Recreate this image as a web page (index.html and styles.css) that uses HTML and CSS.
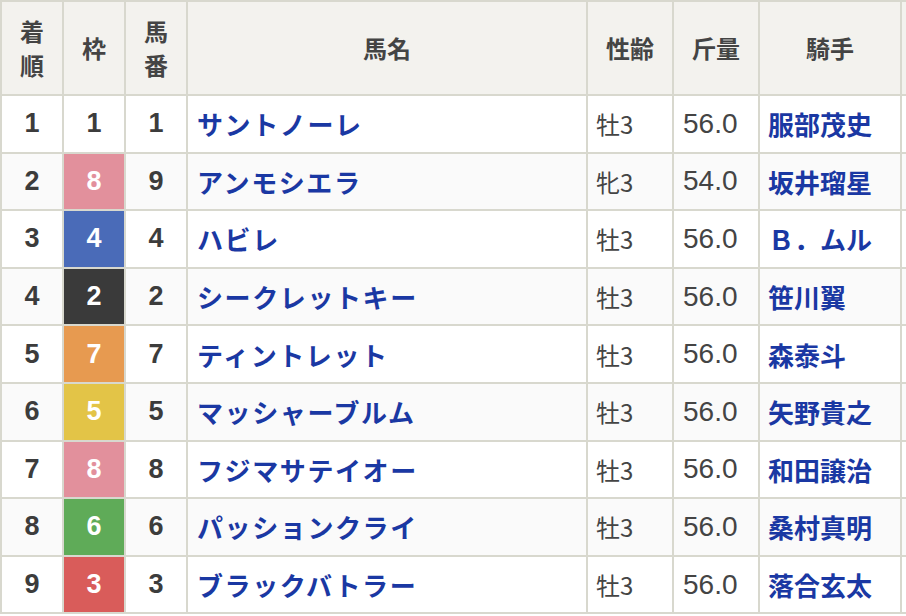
FILE: index.html
```html
<!DOCTYPE html>
<html lang="ja">
<head>
<meta charset="utf-8">
<link rel="stylesheet" href="styles.css">
</head>
<body>
<table class="result">
  <colgroup>
    <col class="c-rank"><col class="c-waku"><col class="c-num"><col class="c-name"><col class="c-sex"><col class="c-wt"><col class="c-jockey"><col class="c-time">
  </colgroup>
  <thead>
    <tr>
      <th>着<br>順</th><th>枠</th><th>馬<br>番</th><th>馬名</th><th>性齢</th><th>斤量</th><th>騎手</th><th></th>
    </tr>
  </thead>
  <tbody>
    <tr><td class="num">1</td><td class="num waku w1">1</td><td class="num">1</td><td class="name">サントノーレ</td><td class="sex">牡3</td><td class="wt">56.0</td><td class="jockey">服部茂史</td><td></td></tr>
    <tr><td class="num">2</td><td class="num waku w8">8</td><td class="num">9</td><td class="name">アンモシエラ</td><td class="sex">牝3</td><td class="wt">54.0</td><td class="jockey">坂井瑠星</td><td></td></tr>
    <tr><td class="num">3</td><td class="num waku w4">4</td><td class="num">4</td><td class="name">ハビレ</td><td class="sex">牡3</td><td class="wt">56.0</td><td class="jockey">Ｂ．ムル</td><td></td></tr>
    <tr><td class="num">4</td><td class="num waku w2">2</td><td class="num">2</td><td class="name">シークレットキー</td><td class="sex">牡3</td><td class="wt">56.0</td><td class="jockey">笹川翼</td><td></td></tr>
    <tr><td class="num">5</td><td class="num waku w7">7</td><td class="num">7</td><td class="name">ティントレット</td><td class="sex">牡3</td><td class="wt">56.0</td><td class="jockey">森泰斗</td><td></td></tr>
    <tr><td class="num">6</td><td class="num waku w5">5</td><td class="num">5</td><td class="name">マッシャーブルム</td><td class="sex">牡3</td><td class="wt">56.0</td><td class="jockey">矢野貴之</td><td></td></tr>
    <tr><td class="num">7</td><td class="num waku w8">8</td><td class="num">8</td><td class="name">フジマサテイオー</td><td class="sex">牡3</td><td class="wt">56.0</td><td class="jockey">和田譲治</td><td></td></tr>
    <tr><td class="num">8</td><td class="num waku w6">6</td><td class="num">6</td><td class="name">パッションクライ</td><td class="sex">牡3</td><td class="wt">56.0</td><td class="jockey">桑村真明</td><td></td></tr>
    <tr><td class="num">9</td><td class="num waku w3">3</td><td class="num">3</td><td class="name">ブラックバトラー</td><td class="sex">牡3</td><td class="wt">56.0</td><td class="jockey">落合玄太</td><td></td></tr>
  </tbody>
</table>
</body>
</html>
```
FILE: styles.css
```css
html, body {
  margin: 0;
  padding: 0;
  background: #ffffff;
  overflow: hidden;
}
body {
  width: 906px;
  height: 616px;
}
.result {
  table-layout: fixed;
  border-collapse: separate;
  border-spacing: 2px;
  background: #d8d8ce;
  width: 1004px;
  font-family: "Noto Sans CJK JP", "Liberation Sans", sans-serif;
  color: #3c3c3c;
}
.c-rank, .c-waku, .c-num { width: 60px; }
.c-name { width: 398px; }
.c-sex, .c-wt { width: 84px; }
.c-jockey { width: 140px; }
.c-time { width: 100px; }

.result th {
  background: #f3f2ee;
  height: 92px;
  padding: 0;
  font-size: 24px;
  font-weight: 700;
  line-height: 34px;
  color: #444444;
  text-align: center;
  vertical-align: middle;
}
.result td {
  height: 55.6px;
  padding: 0;
  vertical-align: middle;
  background: #ffffff;
  white-space: nowrap;
}
.result tbody tr:nth-child(even) td {
  background: #fafafa;
}
.num {
  text-align: center;
  font-family: "Liberation Sans", "Noto Sans CJK JP", sans-serif;
  font-size: 27px;
  font-weight: 700;
  color: #3c3c3c;
}
.result tbody tr td.waku { color: #ffffff; }
.result tbody tr td.w1 { background: #ffffff; color: #3c3c3c; }
.result tbody tr td.w2 { background: #3a3a3a; }
.result tbody tr td.w3 { background: #d95c5a; }
.result tbody tr td.w4 { background: #4a6bb8; }
.result tbody tr td.w5 { background: #e3c447; }
.result tbody tr td.w6 { background: #5fab58; }
.result tbody tr td.w7 { background: #e79a50; }
.result tbody tr td.w8 { background: #e2909c; }
.name {
  padding-left: 9px !important;
  font-size: 26px;
  font-weight: 700;
  letter-spacing: 1.6px;
  color: #1a38a3;
}
.sex {
  padding-left: 8px !important;
  font-size: 24px;
  color: #444444;
}
.wt {
  padding-left: 9px !important;
  font-family: "Liberation Sans", sans-serif;
  font-size: 28px;
  color: #444444;
}
.jockey {
  padding-left: 8px !important;
  font-size: 26px;
  font-weight: 700;
  color: #1a38a3;
}
```
